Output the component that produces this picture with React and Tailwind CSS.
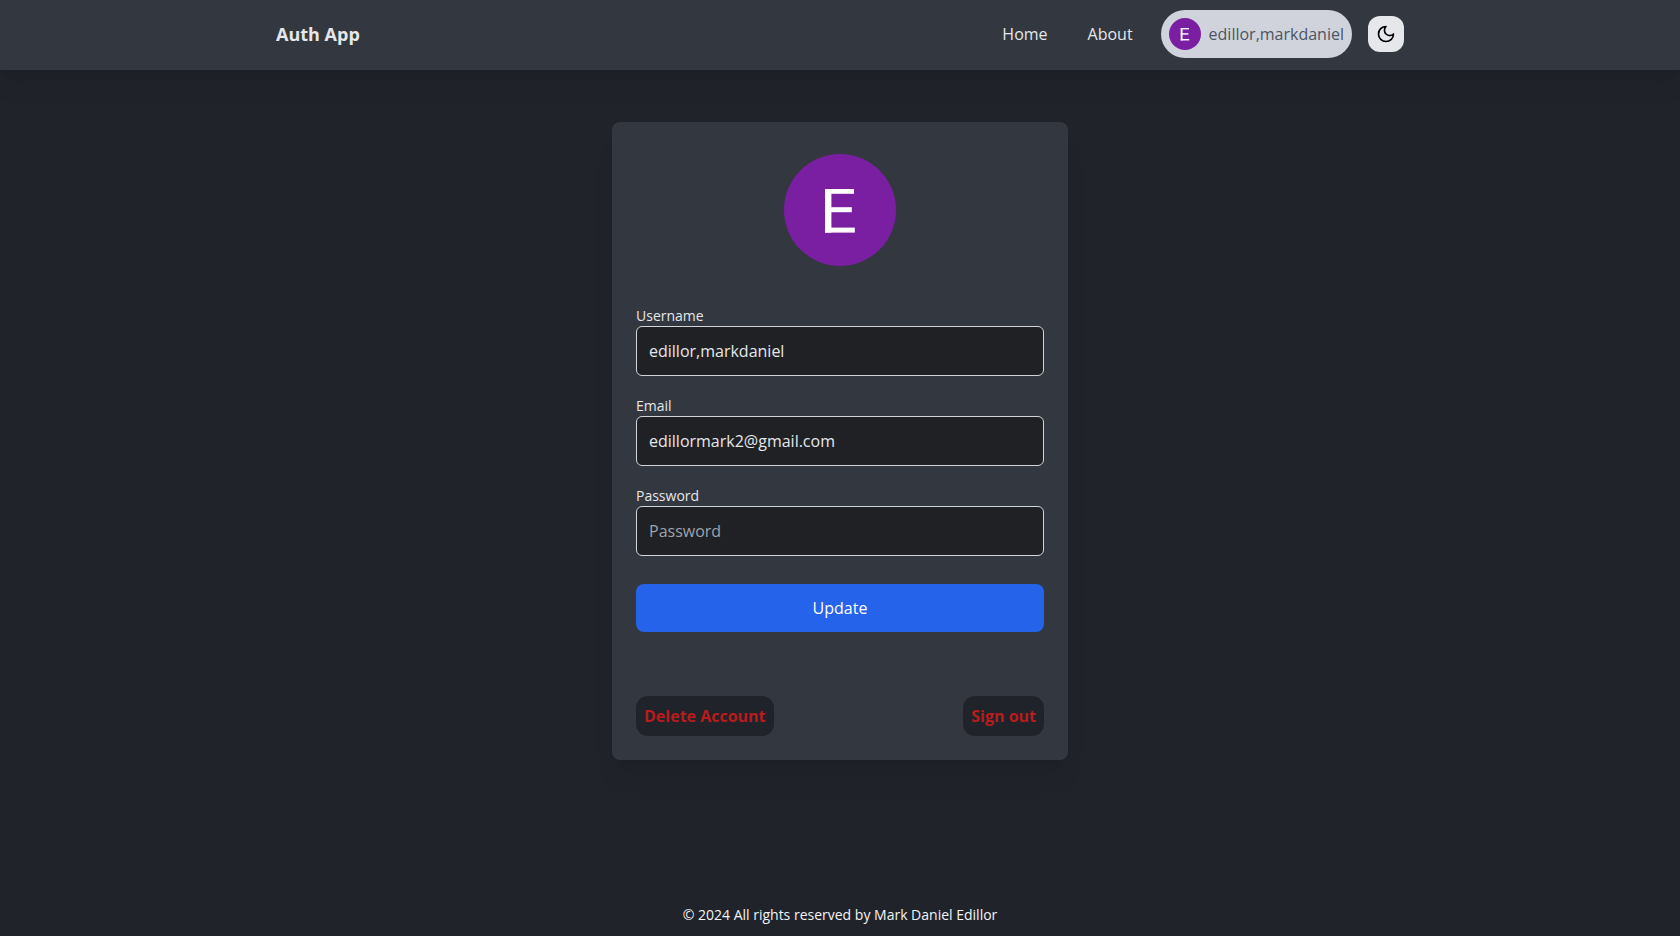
function Avatar({ className }) {
  return (
    <svg viewBox="0 0 112 112" className={className} role="img" aria-label="Profile">
      <circle cx="56" cy="56" r="56" fill="#7b1fa2" />
      <g fill="#fff">
        <rect x="41" y="35" width="6.4" height="43.6" />
        <rect x="41" y="35" width="29" height="4.8" />
        <rect x="41" y="53.2" width="26.8" height="5" />
        <rect x="41" y="73.6" width="29.8" height="5" />
      </g>
    </svg>
  );
}

function Field({ id, label, ...props }) {
  return (
    <div className="flex flex-col">
      <label htmlFor={id} className="text-sm">{label}</label>
      <input
        id={id}
        className="w-full rounded-md border border-[#d1d5db] bg-[#202124] p-3 outline-none placeholder:text-[#9ca3af]"
        {...props}
      />
    </div>
  );
}

function Header() {
  return (
    <header className="bg-[#33373f] shadow-xl shadow-black/7">
      <div className="mx-auto flex max-w-6xl items-center justify-between px-3 pt-[10px] pb-3">
        <a href="#home" className="text-lg font-bold">Auth App</a>
        <div className="flex items-center">
          <nav className="mr-7 flex items-center gap-10">
            <a href="#home">Home</a>
            <a href="#about">About</a>
          </nav>
          <a href="#profile" className="mr-4 flex items-center gap-2 rounded-full bg-[#d0d3dc] p-2 text-[#4b5563]">
            <Avatar className="size-8" />
            <span>edillor,markdaniel</span>
          </a>
          <button type="button" aria-label="Toggle dark mode" className="flex size-9 items-center justify-center rounded-xl bg-gray-200 text-black">
            <svg viewBox="0 0 24 24" className="size-5" fill="none" stroke="currentColor" strokeWidth="2" strokeLinecap="round" strokeLinejoin="round">
              <path d="M12 3a6 6 0 0 0 9 9 9 9 0 1 1-9-9Z" />
            </svg>
          </button>
        </div>
      </div>
    </header>
  );
}

export default function App() {
  return (
    <div className="flex min-h-screen flex-col bg-[#20232a] font-['Open_Sans',sans-serif] text-gray-200">
      <Header />
      <main className="flex grow justify-center px-3 pt-[52px] pb-12">
        <section className="w-full max-w-[456px] self-start rounded-lg bg-[#33373f] px-6 pt-8 pb-6 shadow-xl shadow-black/7">
          <Avatar className="mx-auto size-28" />
          <form className="mt-10 flex flex-col gap-5">
            <Field id="username" label="Username" type="text" defaultValue="edillor,markdaniel" />
            <Field id="email" label="Email" type="email" defaultValue="edillormark2@gmail.com" />
            <Field id="password" label="Password" type="password" placeholder="Password" />
            <button type="button" className="mt-2 rounded-lg bg-[#2563eb] p-3 text-white">Update</button>
          </form>
          <div className="mt-16 flex justify-between font-bold text-[#b91c1c]">
            <button type="button" className="rounded-xl bg-[#20232a] p-2">Delete Account</button>
            <button type="button" className="rounded-xl bg-[#20232a] p-2">Sign out</button>
          </div>
        </section>
      </main>
      <footer className="pb-[11px] text-center text-sm text-gray-100">© 2024 All rights reserved by Mark Daniel Edillor</footer>
    </div>
  );
}
